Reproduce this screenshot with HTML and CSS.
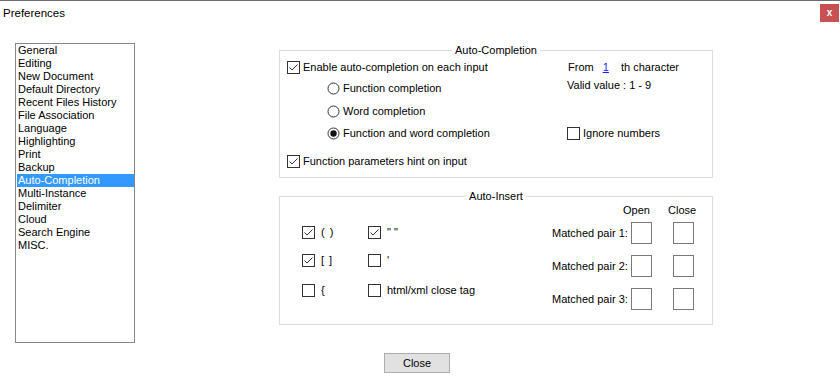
FILE: index.html
```html
<!DOCTYPE html>
<html lang="en">
  <head>
    <meta charset="UTF-8" />
    <title>Preferences</title>
    <link rel="stylesheet" href="styles.css">
  </head>
  <body>
    <div class="titlebar">
      <span class="title">Preferences</span>
      <span class="close-x">x</span>
    </div>

    <div class="main">
      <ul class="nav">
        <li>General</li>
        <li>Editing</li>
        <li>New Document</li>
        <li>Default Directory</li>
        <li>Recent Files History</li>
        <li>File Association</li>
        <li>Language</li>
        <li>Highlighting</li>
        <li>Print</li>
        <li>Backup</li>
        <li class="active">Auto-Completion</li>
        <li>Multi-Instance</li>
        <li>Delimiter</li>
        <li>Cloud</li>
        <li>Search Engine</li>
        <li>MISC.</li>
      </ul>

      <div class="panel">
        <fieldset class="group">
          <legend>Auto-Completion</legend>
          <div class="completion">
            <div class="col-left">
              <label class="opt row-enable">
                <svg class="box" width="13" height="13" viewBox="0 0 13 13"><rect x="0.5" y="0.5" width="12" height="12" fill="#fff" stroke="#333"/><polyline points="2.5,6.5 5,9 10.5,3.5" fill="none" stroke="#333"/></svg>
                Enable auto-completion on each input
              </label>
              <label class="opt radio row-func">
                <svg class="box" width="13" height="13" viewBox="0 0 13 13"><circle cx="6.5" cy="6.5" r="5.5" fill="#fff" stroke="#333"/></svg>
                Function completion
              </label>
              <label class="opt radio row-word">
                <svg class="box" width="13" height="13" viewBox="0 0 13 13"><circle cx="6.5" cy="6.5" r="5.5" fill="#fff" stroke="#333"/></svg>
                Word completion
              </label>
              <label class="opt radio row-both">
                <svg class="box" width="13" height="13" viewBox="0 0 13 13"><circle cx="6.5" cy="6.5" r="5.5" fill="#fff" stroke="#333"/><circle cx="6.5" cy="6.5" r="3.2" fill="#111"/></svg>
                Function and word completion
              </label>
              <label class="opt row-params">
                <svg class="box" width="13" height="13" viewBox="0 0 13 13"><rect x="0.5" y="0.5" width="12" height="12" fill="#fff" stroke="#333"/><polyline points="2.5,6.5 5,9 10.5,3.5" fill="none" stroke="#333"/></svg>
                Function parameters hint on input
              </label>
            </div>
            <div class="col-right">
              <div class="row-from">From <span class="num">1</span> th character</div>
              <div class="row-valid">Valid value : 1 - 9</div>
              <label class="opt row-ignore">
                <svg class="box" width="13" height="13" viewBox="0 0 13 13"><rect x="0.5" y="0.5" width="12" height="12" fill="#fff" stroke="#333"/></svg>
                Ignore numbers
              </label>
            </div>
          </div>
        </fieldset>

        <fieldset class="group group-insert">
          <legend>Auto-Insert</legend>
          <div class="insert">
            <div class="chars">
              <div class="char-row r1">
                <label class="opt char">
                  <svg class="box" width="13" height="13" viewBox="0 0 13 13"><rect x="0.5" y="0.5" width="12" height="12" fill="#fff" stroke="#333"/><polyline points="2.5,6.5 5,9 10.5,3.5" fill="none" stroke="#333"/></svg>
                  (&nbsp;)
                </label>
                <label class="opt">
                  <svg class="box" width="13" height="13" viewBox="0 0 13 13"><rect x="0.5" y="0.5" width="12" height="12" fill="#fff" stroke="#333"/><polyline points="2.5,6.5 5,9 10.5,3.5" fill="none" stroke="#333"/></svg>
                  "&nbsp;"
                </label>
              </div>
              <div class="char-row r2">
                <label class="opt char">
                  <svg class="box" width="13" height="13" viewBox="0 0 13 13"><rect x="0.5" y="0.5" width="12" height="12" fill="#fff" stroke="#333"/><polyline points="2.5,6.5 5,9 10.5,3.5" fill="none" stroke="#333"/></svg>
                  [&nbsp;]
                </label>
                <label class="opt">
                  <svg class="box" width="13" height="13" viewBox="0 0 13 13"><rect x="0.5" y="0.5" width="12" height="12" fill="#fff" stroke="#333"/></svg>
                  '
                </label>
              </div>
              <div class="char-row r3">
                <label class="opt char">
                  <svg class="box" width="13" height="13" viewBox="0 0 13 13"><rect x="0.5" y="0.5" width="12" height="12" fill="#fff" stroke="#333"/></svg>
                  {
                </label>
                <label class="opt">
                  <svg class="box" width="13" height="13" viewBox="0 0 13 13"><rect x="0.5" y="0.5" width="12" height="12" fill="#fff" stroke="#333"/></svg>
                  html/xml close tag
                </label>
              </div>
            </div>

            <div class="pairs">
              <div class="pairs-head">
                <span></span>
                <span class="head-open">Open</span>
                <span class="head-close">Close</span>
              </div>
              <div class="pairs-grid">
                <span class="pair-label">Matched pair 1:</span>
                <span class="edit"></span>
                <span class="edit"></span>
                <span class="pair-label">Matched pair 2:</span>
                <span class="edit"></span>
                <span class="edit"></span>
                <span class="pair-label">Matched pair 3:</span>
                <span class="edit"></span>
                <span class="edit"></span>
              </div>
            </div>
          </div>
        </fieldset>
      </div>
    </div>

    <div class="footer">
      <button>Close</button>
    </div>
  </body>
</html>
```

FILE: styles.css
```css
* {
  box-sizing: border-box;
  margin: 0;
  padding: 0;
}
body {
  background-color: #fff;
  color: #000;
  font-family: "Liberation Sans", Arial, sans-serif;
  font-size: 11px;
  line-height: 13px;
  width: 840px;
  height: 384px;
  overflow: hidden;
}

/* title bar */
.titlebar {
  display: flex;
  justify-content: space-between;
  align-items: flex-start;
  height: 27px;
  border-top: 1px solid #6e6e6e;
}
.title {
  font-size: 11.5px;
  margin: 6px 0 0 3px;
}
.close-x {
  width: 19px;
  height: 18px;
  margin: 3px 1px 0 0;
  background-color: #c75050;
  color: #fff;
  font-weight: bold;
  font-size: 10px;
  line-height: 17px;
  text-align: center;
}

/* body */
.main {
  display: flex;
  align-items: flex-start;
  padding-left: 15px;
}
.nav {
  list-style: none;
  width: 120px;
  height: 300px;
  margin-top: 16px;
  padding: 0 0 0 1px;
  border: 1px solid #828790;
}
.nav li {
  height: 13px;
  line-height: 13px;
  padding-left: 1px;
}
.nav li.active {
  background-color: #3399ff;
  color: #fff;
}

.panel {
  margin-left: 144px;
  margin-top: 17px;
}
.group {
  width: 434px;
  min-width: 0;
  border: 1px solid #dcdcdc;
  padding: 0;
}
.group legend {
  margin: 0 auto;
  padding: 0 3px;
  line-height: 13px;
}
.group-insert {
  margin-top: 12px;
}

.opt {
  display: flex;
  align-items: center;
  height: 13px;
  white-space: nowrap;
}
.opt .box {
  flex: none;
  margin-right: 3px;
}

/* auto-completion */
.completion {
  display: flex;
  height: 120px;
  padding-left: 7px;
}
.col-left {
  width: 280px;
}
.row-enable {
  margin-top: 4px;
}
.radio {
  padding-left: 40px;
}
.row-func {
  margin-top: 8px;
}
.row-word {
  margin-top: 10px;
}
.row-both {
  margin-top: 9px;
}
.row-params {
  margin-top: 15px;
}
.row-from {
  margin-top: 4px;
  padding-left: 1px;
  height: 13px;
}
.num {
  color: #1a1aff;
  text-decoration: underline;
  margin: 0 9px 0 6px;
}
.row-valid {
  margin-top: 5px;
  height: 13px;
}
.row-ignore {
  margin-top: 35px;
}

/* auto-insert */
.insert {
  display: flex;
  height: 121px;
  padding-left: 22px;
}
.chars {
  width: 250px;
}
.chars .opt .box {
  margin-right: 6px;
}
.char-row {
  display: flex;
}
.char-row.r1 {
  margin-top: 23px;
}
.char-row.r2 {
  margin-top: 15px;
}
.char-row.r3 {
  margin-top: 17px;
}
.char {
  width: 66px;
  word-spacing: 2px;
}
.pairs-head,
.pairs-grid {
  display: grid;
  grid-template-columns: 79px 42px 21px;
}
.pairs-head {
  margin-top: 1px;
  margin-bottom: 5px;
  height: 13px;
}
.head-open {
  margin-left: -8px;
}
.head-close {
  margin-left: -5px;
}
.pairs-grid {
  row-gap: 11px;
  align-items: center;
}
.pair-label {
  text-align: right;
  padding-right: 4px;
  white-space: nowrap;
}
.edit {
  width: 21px;
  height: 22px;
  border: 1px solid #7a7a7a;
  background-color: #fff;
}

/* footer */
.footer {
  padding-left: 384px;
  margin-top: 10px;
}
button {
  width: 66px;
  height: 20px;
  border: 1px solid #adadad;
  background-color: #e1e1e1;
  font-family: "Liberation Sans", Arial, sans-serif;
  font-size: 11px;
  color: #000;
}
```
